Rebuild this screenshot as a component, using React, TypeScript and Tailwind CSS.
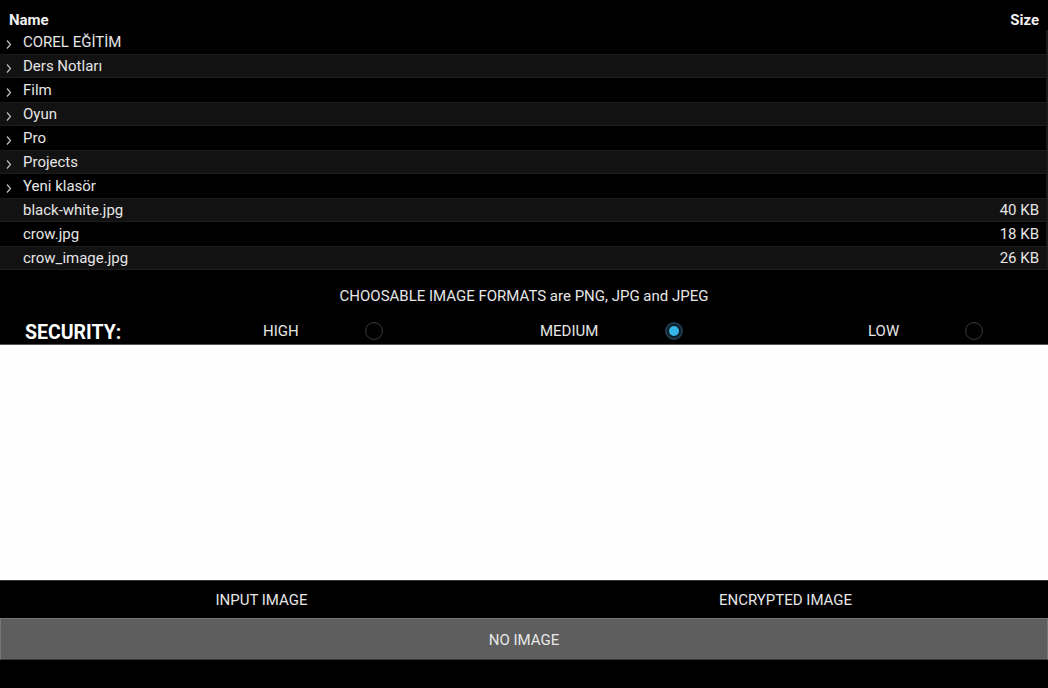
const rows = [
  { name: 'COREL EĞİTİM', dir: true },
  { name: 'Ders Notları', dir: true },
  { name: 'Film', dir: true },
  { name: 'Oyun', dir: true },
  { name: 'Pro', dir: true },
  { name: 'Projects', dir: true },
  { name: 'Yeni klasör', dir: true },
  { name: 'black-white.jpg', size: '40 KB' },
  { name: 'crow.jpg', size: '18 KB' },
  { name: 'crow_image.jpg', size: '26 KB' },
];

function Chevron() {
  return (
    <svg width="8" height="11" viewBox="0 0 8 11" className="mt-[5px]">
      <path d="M2 1.5 L5.5 5.5 L2 9.5" fill="none" stroke="#bdbdbd" strokeWidth="1.2" />
    </svg>
  );
}

function Radio({ checked }: { checked?: boolean }) {
  return (
    <div
      className={
        checked
          ? 'w-[18px] h-[18px] rounded-full border-[2px] border-[#1f3b4d] bg-[#0f1d26] flex items-center justify-center'
          : 'w-[18px] h-[18px] rounded-full border border-[#3a3a3a]'
      }
    >
      {checked && <div className="w-[10px] h-[10px] rounded-full bg-[#33b5e5]" />}
    </div>
  );
}

export default function App() {
  return (
    <div
      className="w-[1048px] h-[688px] bg-black text-[#e6e6e6] flex flex-col overflow-hidden text-[15px]"
      style={{ fontFamily: 'Roboto, "Liberation Sans", sans-serif' }}
    >
      <div className="h-[30px] flex items-start justify-between px-[9px] pt-[11px] leading-[18px] font-bold text-[#f0f0f0]">
        <span>Name</span>
        <span>Size</span>
      </div>
      <div className="flex">
        <div className="w-[1046px] flex flex-col">
          {rows.map((r, i) => (
            <div
              key={r.name}
              className={
                'h-[24px] flex items-center ' +
                (i % 2 === 1 ? 'bg-[#121212] border-y border-[#1c1c1c]' : '')
              }
            >
              <div className="w-[23px] flex justify-center pr-[6px]">{r.dir && <Chevron />}</div>
              <span className="flex-1">{r.name}</span>
              <span className="pr-[7px]">{r.size}</span>
            </div>
          ))}
        </div>
        <div className="w-[2px] bg-[#1a1a1a]" />
      </div>
      <div className="h-[48px] pt-[16px] leading-[20px] text-center">
        CHOOSABLE IMAGE FORMATS are PNG, JPG and JPEG
      </div>
      <div className="h-[27px] flex items-center border-b border-[#555]">
        <div className="w-[263px] pl-[25px] pt-[3px] text-[19.5px] font-bold text-white">SECURITY:</div>
        <div className="w-[102px]">HIGH</div>
        <Radio />
        <div className="w-[157px]" />
        <div className="w-[125px]">MEDIUM</div>
        <Radio checked />
        <div className="w-[185px]" />
        <div className="w-[97px]">LOW</div>
        <Radio />
      </div>
      <div className="h-[235px] bg-[#fefefe]" />
      <div className="h-[38px] flex items-center border-t border-[#333] pt-[2px]">
        <div className="w-[523px] text-center">INPUT IMAGE</div>
        <div className="flex-1 text-center">ENCRYPTED IMAGE</div>
      </div>
      <div className="h-[42px] bg-[#5e5e5e] border border-[#777] border-b-[#3a3a3a] flex items-center justify-center pt-[2px] text-[#e8e8e8]">
        NO IMAGE
      </div>
    </div>
  );
}
